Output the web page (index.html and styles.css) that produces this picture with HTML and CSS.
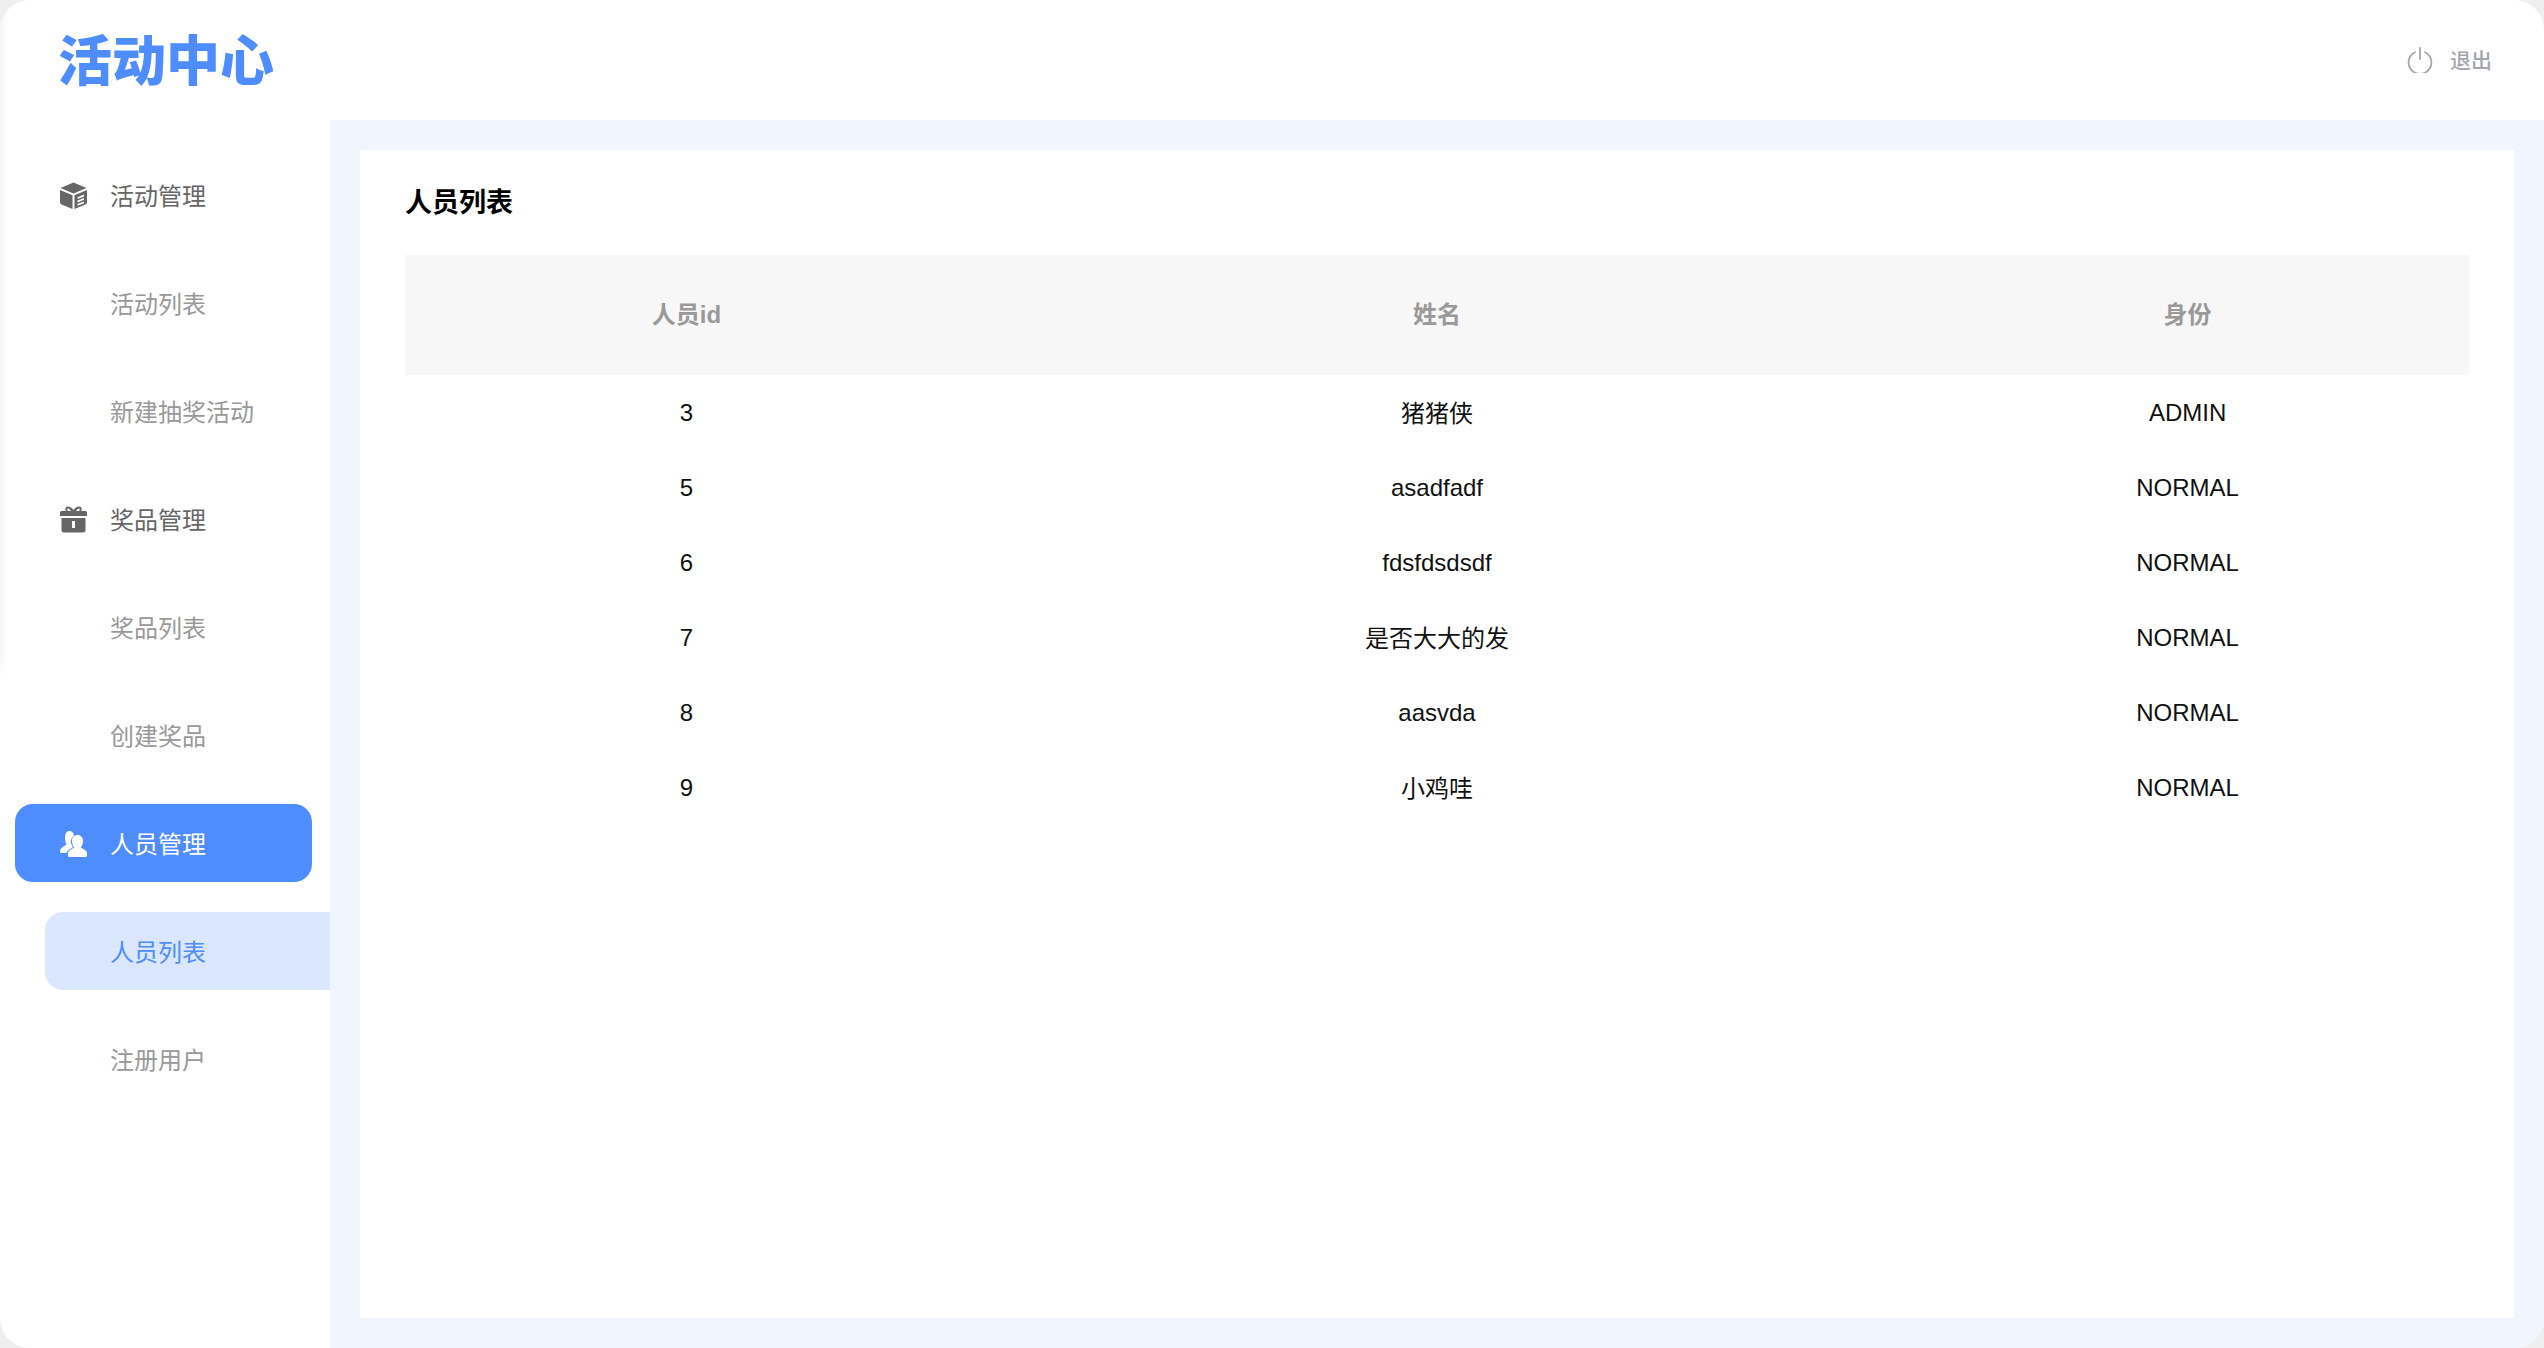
FILE: index.html
```html
<!DOCTYPE html>
<html lang="zh-CN">
<head>
<meta charset="utf-8">
<title>活动中心</title>
<link rel="stylesheet" href="styles.css">
</head>
<body>
<div class="frame">
  <header class="topbar">
    <div class="logo">活动中心</div>
    <a class="logout">
      <svg class="power" viewBox="0 0 26 26" fill="none" stroke="currentColor" stroke-width="1.8" stroke-linecap="round"><path d="M8 5.2a11.4 11.4 0 1 0 10 0"/><path d="M13 1v11"/></svg>
      <span class="logout-label">退出</span>
    </a>
  </header>
  <div class="body">
    <aside class="sidebar">
      <div class="group">
        <svg class="icon" viewBox="0 0 27 27" fill="currentColor"><path d="M13.5 0.5 26.5 6 13.5 11.5 0.5 6Z"/><path d="M0 8 12.5 13.3V27L1.5 22.5Q0 21.8 0 20Z"/><path fill-rule="evenodd" d="M27 8 14.5 13.3V27L25.5 22.5Q27 21.8 27 20ZM17.5 15.2 24 12.6V14.4L17.5 17ZM17.5 18.6 24 16V17.8L17.5 20.4ZM17.5 22 24 19.4V21.2L17.5 23.8Z"/></svg>
        <span class="label">活动管理</span>
      </div>
      <div class="sub"><span class="label">活动列表</span></div>
      <div class="sub"><span class="label">新建抽奖活动</span></div>
      <div class="group">
        <svg class="icon" viewBox="0 0 27 27" fill="currentColor"><path fill-rule="evenodd" d="M8 0.5C10 0.5 12 2 13.5 4 15 2 17 0.5 19 0.5 21.5 0.5 22.5 3 21 5H25.5Q27 5 27 6.5V10H0V6.5Q0 5 1.5 5H6C4.500 3 5.500 0.5 8 0.5ZM8 2.500C7 2.500 6.800 4 8 5H11C10 3.500 9 2.500 8 2.500ZM19 2.500C18 2.500 17 3.500 16 5H19C20.200 4 20 2.500 19 2.500Z"/><path fill-rule="evenodd" d="M1.500 12H25.500V24Q25.500 26.500 23 26.500H4Q1.500 26.500 1.500 24ZM12 15V22H15V15Z"/></svg>
        <span class="label">奖品管理</span>
      </div>
      <div class="sub"><span class="label">奖品列表</span></div>
      <div class="sub"><span class="label">创建奖品</span></div>
      <div class="group active">
        <svg class="icon" viewBox="0 0 27 27" fill="currentColor"><path d="M9.500 1C12.500 1 14 3.500 13.800 6 11.500 7.500 10.500 10 11 13 11.300 14.500 12 15.800 13 17L8 20.500Q6.500 21.500 6.500 23H1.500Q0 23 0 21.500 0 18.500 2.500 17L6.500 14.500C5.500 12.500 5 10.500 5 8 5 3.500 6.500 1 9.500 1Z"/><path d="M17.500 5C21 5 23 7.500 23 11 23 13.500 22.200 15.500 20.800 17.500L25 20C26.300 20.800 27 22 27 24V25.500Q27 27 25.500 27H9.500Q8 27 8 25.500V24C8 22 8.800 20.800 10 20L14.200 17.500C12.800 15.500 12 13.500 12 11 12 7.500 14 5 17.500 5Z"/></svg>
        <span class="label">人员管理</span>
      </div>
      <div class="sub current"><span class="label">人员列表</span></div>
      <div class="sub"><span class="label">注册用户</span></div>
    </aside>
    <main class="content">
      <section class="card">
        <h1 class="title">人员列表</h1>
        <table class="people">
          <thead>
            <tr><th class="col-side">人员id</th><th class="col-mid">姓名</th><th class="col-side">身份</th></tr>
          </thead>
          <tbody>
            <tr><td>3</td><td class="cjk">猪猪侠</td><td>ADMIN</td></tr>
            <tr><td>5</td><td>asadfadf</td><td>NORMAL</td></tr>
            <tr><td>6</td><td>fdsfdsdsdf</td><td>NORMAL</td></tr>
            <tr><td>7</td><td class="cjk">是否大大的发</td><td>NORMAL</td></tr>
            <tr><td>8</td><td>aasvda</td><td>NORMAL</td></tr>
            <tr><td>9</td><td class="cjk">小鸡哇</td><td>NORMAL</td></tr>
          </tbody>
        </table>
      </section>
    </main>
  </div>
  <div class="edge"></div>
</div>
</body>
</html>
```
FILE: styles.css
```css
* { box-sizing: border-box; }
html, body { margin: 0; height: 100%; background: #efefef; }
body { font-family: "Noto Sans CJK SC", "Liberation Sans", sans-serif; }
.frame {
  position: relative;
  width: 2544px;
  height: 1348px;
  border-radius: 30px;
  overflow: hidden;
  background: #fff;
  display: flex;
  flex-direction: column;
}
.edge {
  position: absolute;
  left: 0;
  top: 0;
  width: 8px;
  height: 680px;
  background: linear-gradient(to right, #f3f3f3, #fff);
  -webkit-mask-image: linear-gradient(to bottom, #000 96%, transparent);
  mask-image: linear-gradient(to bottom, #000 96%, transparent);
}
.topbar {
  height: 120px;
  flex: none;
  display: flex;
  align-items: center;
  justify-content: space-between;
  padding: 0 52px 0 60px;
}
.logo {
  color: #4d8dff;
  font-size: 54px;
  font-weight: 900;
  line-height: 60px;
  margin-left: -2px;
  padding-bottom: 4px;
}
.logout {
  display: flex;
  align-items: center;
  gap: 17px;
  color: #a3a6ae;
  font-size: 21px;
  font-weight: 500;
}
.logout-label { padding-bottom: 2px; }
.power { width: 26px; height: 26px; }
.body { flex: 1; display: flex; min-height: 0; }
.sidebar {
  width: 330px;
  flex: none;
  padding-top: 36px;
  display: flex;
  flex-direction: column;
  gap: 30px;
  position: relative;
  z-index: 1;
}
.group, .sub {
  height: 78px;
  display: flex;
  align-items: center;
  font-size: 24px;
}
.label { padding-bottom: 2px; }
.group {
  width: 297px;
  margin-left: 15px;
  padding-left: 45px;
  gap: 23px;
  color: #666;
  border-radius: 18px;
}
.icon { width: 27px; height: 27px; flex: none; }
.sub {
  margin-left: 45px;
  padding-left: 65px;
  color: #999;
  border-radius: 18px 0 0 18px;
}
.group.active { background: #4d8dff; color: #fff; }
.sub.current { background: #dbe7ff; color: #4d8dff; }
.content {
  flex: 1;
  background: #f1f5fd;
  padding: 30px;
  display: flex;
}
.card {
  flex: 1;
  background: #fff;
  padding: 33px 45px 0 45px;
}
.title {
  margin: 0 0 31px;
  font-family: "Liberation Sans", "Noto Sans CJK SC", sans-serif;
  font-size: 27px;
  font-weight: 700;
  line-height: 41px;
  color: #000;
}
.people {
  width: 100%;
  border-collapse: collapse;
  table-layout: fixed;
  font-family: "Liberation Sans", "Noto Sans CJK SC", sans-serif;
  font-size: 24px;
  text-align: center;
  color: #111;
}
.people th {
  height: 120px;
  padding: 0 0 5px;
  background: #f7f7f7;
  color: #999;
  font-weight: 700;
}
.col-side { width: 27.27%; }
.col-mid { width: 45.46%; }
.people td { height: 75px; padding: 0; }
.people td.cjk { padding-bottom: 3px; }
```
